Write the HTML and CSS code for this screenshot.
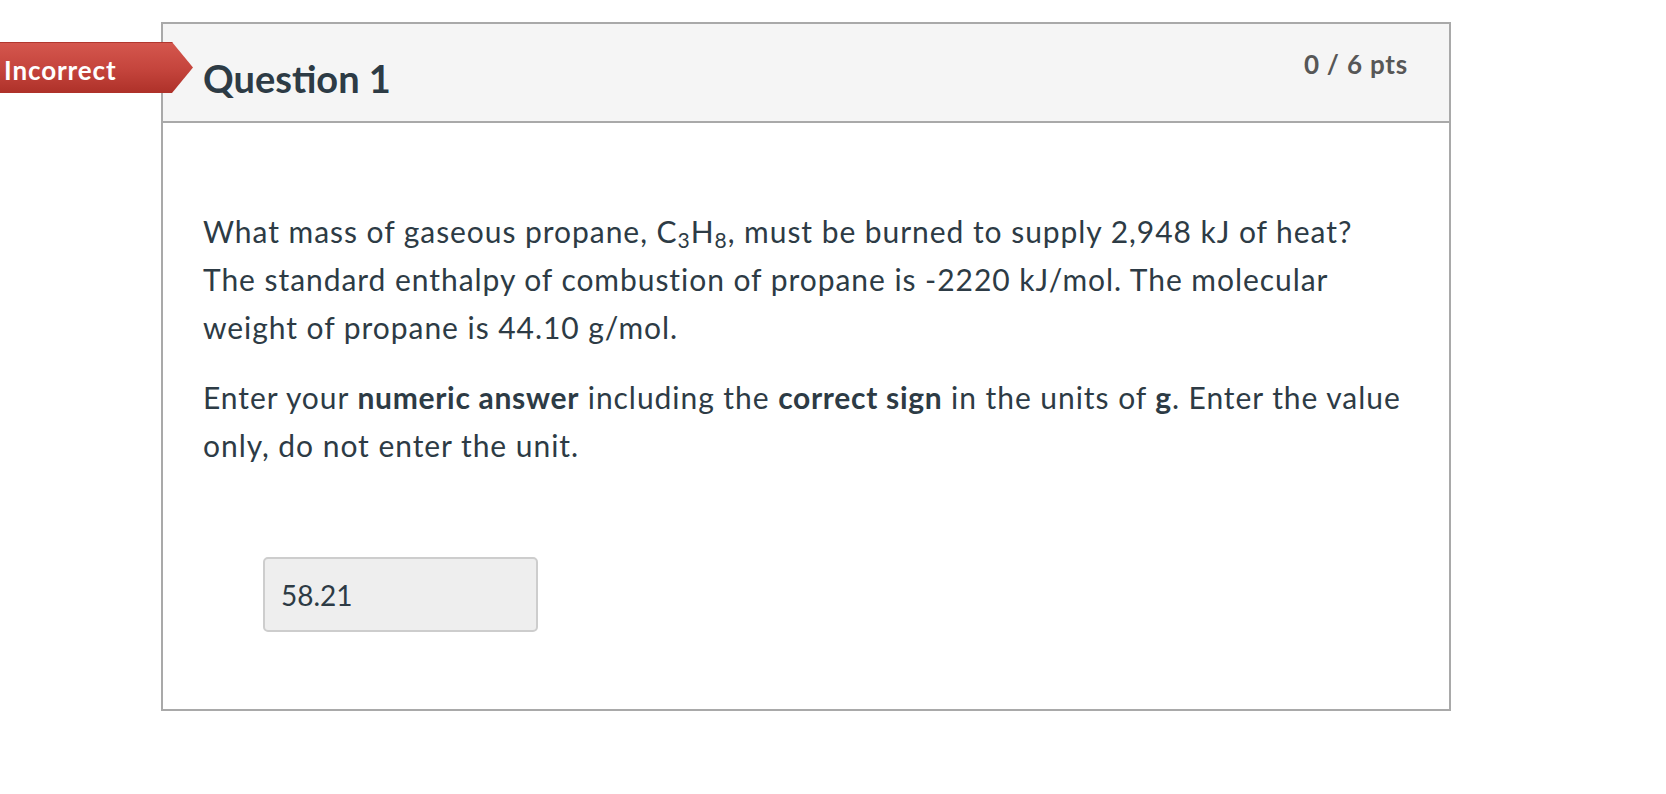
FILE: index.html
```html
<!DOCTYPE html>
<html lang="en">
<head>
<meta charset="utf-8">
<title>Question 1</title>
<link rel="stylesheet" href="styles.css">
</head>
<body>
<div class="page">
  <div class="badge">Incorrect</div>
  <div class="card">
    <div class="card-header">
      <h2 class="title">Question 1</h2>
      <div class="pts">0 / 6 pts</div>
    </div>
    <div class="card-body">
      <p class="text">What mass of gaseous propane, C<sub>3</sub>H<sub>8</sub>, must be burned to supply 2,948 kJ of heat?<br>The standard enthalpy of combustion of propane is -2220 kJ/mol. The molecular<br>weight of propane is 44.10 g/mol.</p>
      <p class="text">Enter your <strong>numeric answer</strong> including the <strong>correct sign</strong> in the units of <strong>g</strong>. Enter the value<br>only, do not enter the unit.</p>
      <div class="answer"><input class="answer-input" type="text" value="58.21" readonly></div>
    </div>
  </div>
</div>
</body>
</html>
```

FILE: styles.css
```css
html, body {
  margin: 0;
  padding: 0;
  background: #ffffff;
}

body {
  font-family: Lato, "Open Sans", "Liberation Sans", sans-serif;
  color: #2d3b45;
}

.page {
  position: relative;
  padding: 22px 0 0 161px;
}

.badge {
  position: absolute;
  left: 0;
  top: 42px;
  width: 193px;
  height: 51px;
  box-sizing: border-box;
  padding: 12px 0 0 4px;
  font-size: 26px;
  font-weight: 700;
  letter-spacing: 0.9px;
  color: #ffffff;
  background: linear-gradient(#d5574e 0%, #c4443c 55%, #ae3129 100%);
  box-shadow: inset 0 1px 0 #b2372f;
  clip-path: polygon(0 0, 172px 0, 193px 50%, 172px 100%, 0 100%);
  z-index: 2;
}

.card {
  width: 1290px;
  box-sizing: border-box;
  border: 2px solid #a9a9a9;
}

.card-header {
  display: flex;
  justify-content: space-between;
  align-items: flex-start;
  height: 97px;
  padding: 0 41px 0 40px;
  background: #f5f5f5;
  border-bottom: 2px solid #a9a9a9;
}

.title {
  margin: 0;
  padding-top: 31px;
  font-size: 38px;
  font-weight: 700;
  line-height: normal;
  color: #2d3b45;
}

.pts {
  padding-top: 24px;
  font-size: 26px;
  font-weight: 700;
  letter-spacing: 0.8px;
  line-height: normal;
  color: #575757;
}

.card-body {
  padding: 84px 40px 77px 40px;
}

.text {
  margin: 0 0 22px 0;
  font-size: 30px;
  line-height: 48px;
  letter-spacing: 0.95px;
}

.text:last-of-type {
  margin-bottom: 0;
}

.text sub {
  font-size: 21px;
  line-height: 0;
  vertical-align: -5px;
}

.text strong {
  font-weight: 700;
  letter-spacing: 0.7px;
}

.answer {
  padding: 88px 0 0 60px;
}

.answer-input {
  display: block;
  width: 275px;
  height: 75px;
  box-sizing: border-box;
  margin: 0;
  padding: 0 16px;
  border: 2px solid #cdcdcd;
  border-radius: 5px;
  background: #eeeeee;
  font-family: Lato, "Open Sans", "Liberation Sans", sans-serif;
  font-size: 28px;
  color: #2d3b45;
  outline: none;
}
```
